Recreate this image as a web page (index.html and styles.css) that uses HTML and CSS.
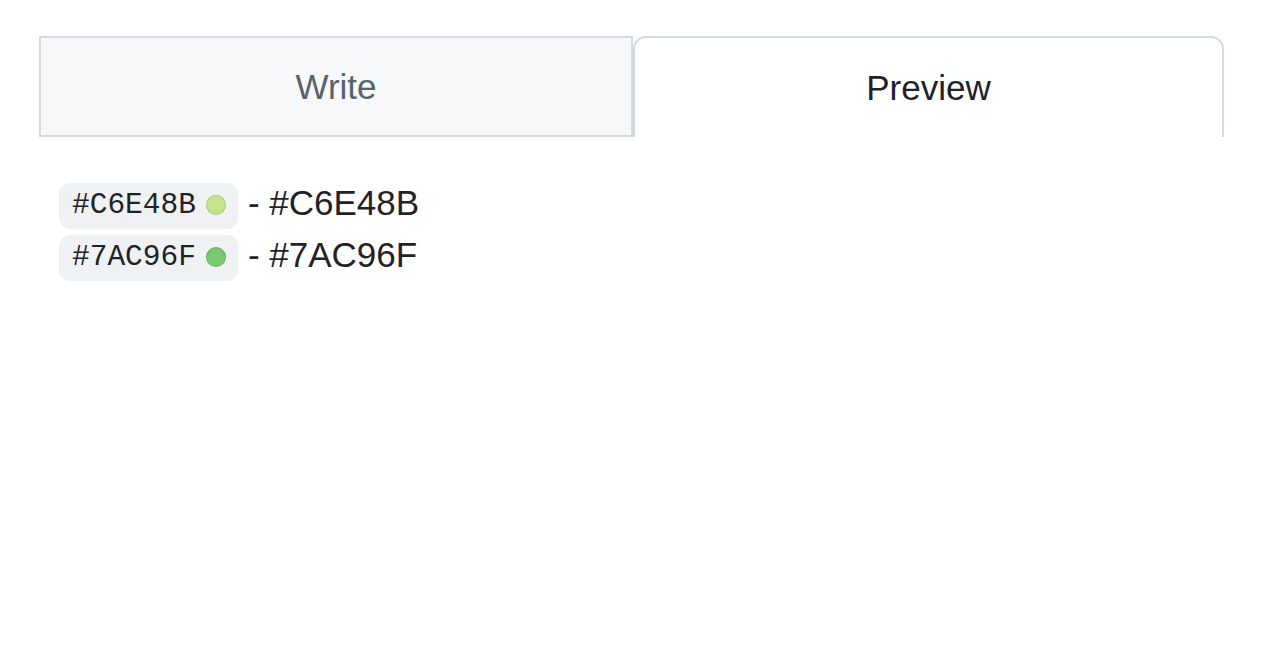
FILE: index.html
```html
<!DOCTYPE html>
<html>
<head>
<meta charset="utf-8">
<link rel="stylesheet" href="styles.css">
</head>
<body>
<div class="page">
  <div class="tabs">
    <div class="tab tab-write">Write</div>
    <div class="tab tab-preview">Preview</div>
  </div>
  <div class="content">
    <div class="row">
      <span class="chip"><code>#C6E48B</code><span class="dot dot-1"></span></span>
      <span class="label">- #C6E48B</span>
    </div>
    <div class="row">
      <span class="chip"><code>#7AC96F</code><span class="dot dot-2"></span></span>
      <span class="label">- #7AC96F</span>
    </div>
  </div>
</div>
</body>
</html>
```
FILE: styles.css
```css
html, body {
  margin: 0;
  padding: 0;
  background: #ffffff;
}
body {
  font-family: "Liberation Sans", Arial, sans-serif;
  color: #1f2328;
}
.page {
  padding: 36px 37px 0 39px;
}
.tabs {
  display: flex;
  width: 1185px;
}
.tab {
  height: 101px;
  box-sizing: border-box;
  display: flex;
  align-items: center;
  justify-content: center;
  font-size: 35px;
}
.tab-write {
  width: 594px;
  background: #f6f8fa;
  border: 2px solid #d3dae0;
  color: #59636e;
}
.tab-preview {
  width: 591px;
  background: #ffffff;
  border: 2px solid #d3dae0;
  border-bottom: none;
  border-radius: 13px 13px 0 0;
  color: #1f2328;
}
.content {
  padding: 46px 20px 0 20px;
  display: flex;
  flex-direction: column;
  gap: 6px;
}
.row {
  display: flex;
  align-items: center;
  gap: 10px;
  height: 46px;
}
.chip {
  display: flex;
  align-items: center;
  gap: 10px;
  height: 46px;
  box-sizing: border-box;
  padding: 0 12px 3px 13px;
  background: #eff1f3;
  border-radius: 11px;
}
.chip code {
  font-family: "Liberation Mono", "Courier New", monospace;
  font-size: 29.5px;
  color: #1f2328;
}
.dot {
  width: 20px;
  height: 20px;
  border-radius: 50%;
  box-sizing: border-box;
  border: 1px solid rgba(31, 35, 40, 0.15);
}
.dot-1 { background: #C6E48B; }
.dot-2 { background: #7AC96F; }
.label {
  font-size: 35px;
  color: #1f2328;
  margin-top: -6px;
}
```
